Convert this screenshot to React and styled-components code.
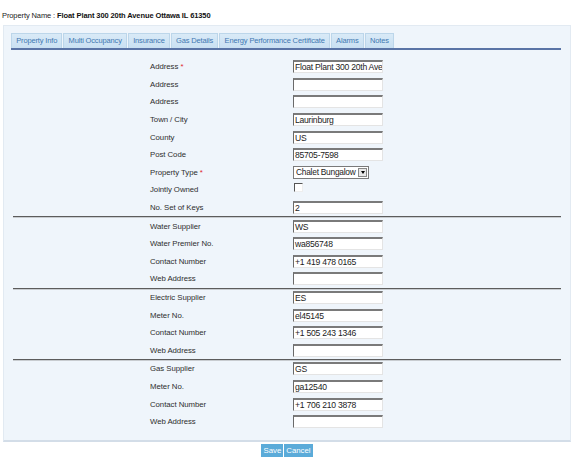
import styled, { createGlobalStyle } from "styled-components";

const GlobalStyle = createGlobalStyle`
  body {
    margin: 0;
    background: #fff;
    font-family: "Liberation Sans", Arial, sans-serif;
  }
`;

const Page = styled.div`
  width: 574px;
  height: 470px;
  padding: 9px 0 0 2px;
  box-sizing: border-box;
`;

const Title = styled.div`
  font-size: 7.5px;
  letter-spacing: -0.1px;
  color: #222;
  height: 13px;
  line-height: 13px;
  b {
    font-weight: bold;
    color: #111;
  }
`;

const Panel = styled.div`
  margin: 3px 3px 0 1px;
  background: #eff5fb;
  border: 1px solid #e2eaf2;
  border-bottom: 2px solid #d3dde8;
  padding: 7px 0 10px;
`;

const TabBar = styled.div`
  display: flex;
  gap: 1px;
  margin: 0 9px 0 7px;
  border-bottom: 2px solid #5a74a6;
`;

const Tab = styled.div`
  font-size: 7.5px;
  letter-spacing: -0.15px;
  color: #3f78b2;
  background: linear-gradient(#d9eaf7, #c9e0f2);
  border: 1px solid #bcd6ea;
  border-bottom: none;
  height: 14px;
  line-height: 14px;
  padding: 0 4.2px;
`;

const Form = styled.div`
  margin: 8px 9px 0 9px;
`;

const Section = styled.div`
  border-top: ${(p) => (p.$divided ? "1px solid #5c5c5c" : "none")};
  box-shadow: ${(p) => (p.$divided ? "inset 0 1px 0 #c8ccd0" : "none")};
`;

const Row = styled.div`
  display: grid;
  grid-template-columns: 143px 90px;
  align-items: center;
  height: 17.6px;
  padding-left: 137px;
`;

const Label = styled.div`
  font-size: 7.8px;
  letter-spacing: -0.05px;
  color: #2e2e2e;
  span {
    color: #e0282c;
  }
`;

const Input = styled.div`
  height: 13px;
  box-sizing: border-box;
  background: #fff;
  border-top: 2px solid #7a7a7a;
  border-left: 1px solid #6a6a6a;
  border-right: 1px solid #e4e4e4;
  border-bottom: 1px solid #e4e4e4;
  font-size: 8.6px;
  letter-spacing: -0.25px;
  line-height: 10px;
  color: #222;
  padding-left: 1px;
  white-space: nowrap;
  overflow: hidden;
`;

const Select = styled.div`
  width: 76px;
  height: 13px;
  box-sizing: border-box;
  background: #fff;
  border: 1px solid #7a7a7a;
  display: flex;
  align-items: center;
  font-size: 8.4px;
  letter-spacing: -0.25px;
  color: #222;
  padding-left: 2px;
  white-space: nowrap;
`;

const Arrow = styled.div`
  width: 9px;
  height: 9px;
  margin-left: auto;
  margin-right: 1px;
  background: #e8e8e8;
  border: 1px solid #888;
  box-sizing: border-box;
  display: flex;
  align-items: center;
  justify-content: center;
  &::after {
    content: "";
    border-left: 2px solid transparent;
    border-right: 2px solid transparent;
    border-top: 3px solid #000;
  }
`;

const Check = styled.div`
  width: 7px;
  height: 7px;
  margin: -4px 0 0 1px;
  border-top: 1px solid #555;
  border-left: 1px solid #555;
  border-right: 1px solid #eee;
  border-bottom: 1px solid #eee;
  background: #fff;
`;

const Buttons = styled.div`
  display: flex;
  justify-content: center;
  gap: 1px;
  margin: 2px 0 0 -2px;
`;

const Button = styled.div`
  background: #5babd9;
  color: #fff;
  font-size: 7.8px;
  height: 13px;
  line-height: 13px;
  padding: 0 2px;
`;

const tabs = [
  "Property Info",
  "Multi Occupancy",
  "Insurance",
  "Gas Details",
  "Energy Performance Certificate",
  "Alarms",
  "Notes",
];

const sections = [
  [
    { label: "Address", req: true, value: "Float Plant 300 20th Ave" },
    { label: "Address", value: "" },
    { label: "Address", value: "" },
    { label: "Town / City", value: "Laurinburg" },
    { label: "County", value: "US" },
    { label: "Post Code", value: "85705-7598" },
    { label: "Property Type", req: true, type: "select", value: "Chalet Bungalow" },
    { label: "Jointly Owned", type: "check" },
    { label: "No. Set of Keys", value: "2" },
  ],
  [
    { label: "Water Supplier", value: "WS" },
    { label: "Water Premier No.", value: "wa856748" },
    { label: "Contact Number", value: "+1 419 478 0165" },
    { label: "Web Address", value: "" },
  ],
  [
    { label: "Electric Supplier", value: "ES" },
    { label: "Meter No.", value: "el45145" },
    { label: "Contact Number", value: "+1 505 243 1346" },
    { label: "Web Address", value: "" },
  ],
  [
    { label: "Gas Supplier", value: "GS" },
    { label: "Meter No.", value: "ga12540" },
    { label: "Contact Number", value: "+1 706 210 3878" },
    { label: "Web Address", value: "" },
  ],
];

const Field = ({ f }) => {
  if (f.type === "select")
    return (
      <Select>
        {f.value}
        <Arrow />
      </Select>
    );
  if (f.type === "check") return <Check />;
  return <Input>{f.value}</Input>;
};

export default function App() {
  return (
    <>
      <GlobalStyle />
      <Page>
        <Title>
          Property Name : <b>Float Plant 300 20th Avenue Ottawa IL 61350</b>
        </Title>
        <Panel>
          <TabBar>
            {tabs.map((t) => (
              <Tab key={t}>{t}</Tab>
            ))}
          </TabBar>
          <Form>
            {sections.map((rows, i) => (
              <Section key={i} $divided={i > 0}>
                {rows.map((f, j) => (
                  <Row key={j}>
                    <Label>
                      {f.label}
                      {f.req && <span> *</span>}
                    </Label>
                    <div>
                      <Field f={f} />
                    </div>
                  </Row>
                ))}
              </Section>
            ))}
          </Form>
        </Panel>
        <Buttons>
          <Button>Save</Button>
          <Button>Cancel</Button>
        </Buttons>
      </Page>
    </>
  );
}
